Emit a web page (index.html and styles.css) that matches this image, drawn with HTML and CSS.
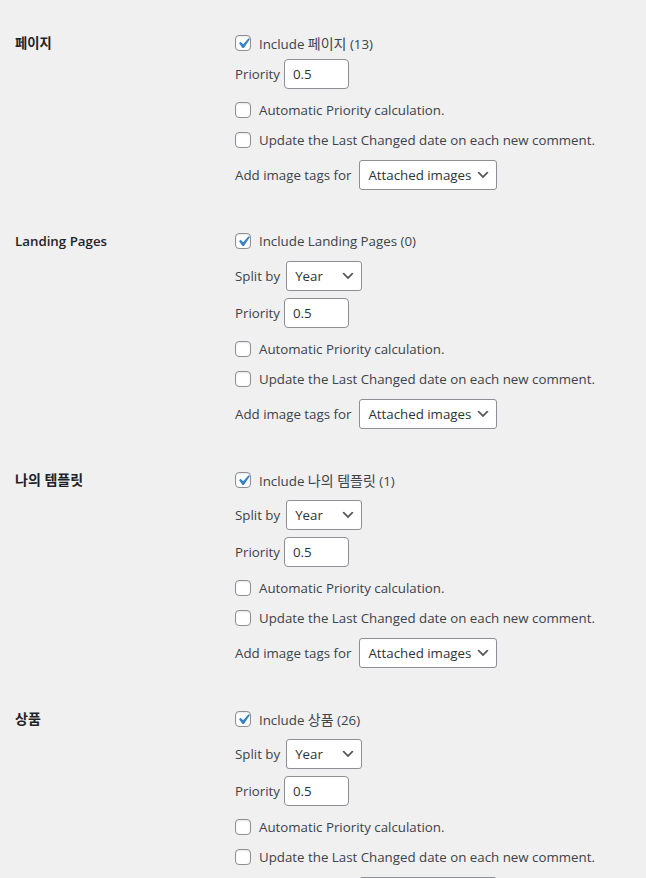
FILE: index.html
```html
<!DOCTYPE html>
<html lang="ko">
  <head>
    <meta charset="UTF-8" />
    <meta name="viewport" content="width=device-width, initial-scale=1" />
    <title>Sitemap settings</title>
    <link rel="stylesheet" href="styles.css">
  </head>
  <body>
    <div class="settings">
      <!-- 페이지 -->
      <section class="post-type">
        <h3 class="post-type-title">페이지</h3>
        <div class="post-type-fields">
          <label class="cb-row">
            <span class="check is-checked"><svg viewBox="0 0 20 20"><path d="M14.83 4.89l1.34.94-5.81 8.38H9.02L5.78 9.67l1.34-1.25 2.57 2.4z"/></svg></span>
            <span>Include <span class="ko">페이지</span> (13)</span>
          </label>
          <div class="field-row first-field">
            <span>Priority</span>
            <span class="text-input">0.5</span>
          </div>
          <label class="cb-row after-field">
            <span class="check"></span>
            Automatic Priority calculation.
          </label>
          <label class="cb-row">
            <span class="check"></span>
            Update the Last Changed date on each new comment.
          </label>
          <div class="field-row">
            <span>Add image tags for</span>
            <span class="select select-wide">Attached images<svg viewBox="0 0 20 20"><path d="M5 6l5 5 5-5 2 1-7 7-7-7 2-1z"/></svg></span>
          </div>
        </div>
      </section>

      <!-- Landing Pages -->
      <section class="post-type">
        <h3 class="post-type-title">Landing Pages</h3>
        <div class="post-type-fields">
          <label class="cb-row">
            <span class="check is-checked"><svg viewBox="0 0 20 20"><path d="M14.83 4.89l1.34.94-5.81 8.38H9.02L5.78 9.67l1.34-1.25 2.57 2.4z"/></svg></span>
            Include Landing Pages (0)
          </label>
          <div class="field-row">
            <span>Split by</span>
            <span class="select select-small">Year<svg viewBox="0 0 20 20"><path d="M5 6l5 5 5-5 2 1-7 7-7-7 2-1z"/></svg></span>
          </div>
          <div class="field-row after-select">
            <span>Priority</span>
            <span class="text-input">0.5</span>
          </div>
          <label class="cb-row after-field">
            <span class="check"></span>
            Automatic Priority calculation.
          </label>
          <label class="cb-row">
            <span class="check"></span>
            Update the Last Changed date on each new comment.
          </label>
          <div class="field-row">
            <span>Add image tags for</span>
            <span class="select select-wide">Attached images<svg viewBox="0 0 20 20"><path d="M5 6l5 5 5-5 2 1-7 7-7-7 2-1z"/></svg></span>
          </div>
        </div>
      </section>

      <!-- 나의 템플릿 -->
      <section class="post-type">
        <h3 class="post-type-title ko">나의 템플릿</h3>
        <div class="post-type-fields">
          <label class="cb-row">
            <span class="check is-checked"><svg viewBox="0 0 20 20"><path d="M14.83 4.89l1.34.94-5.81 8.38H9.02L5.78 9.67l1.34-1.25 2.57 2.4z"/></svg></span>
            <span>Include <span class="ko">나의 템플릿</span> (1)</span>
          </label>
          <div class="field-row">
            <span>Split by</span>
            <span class="select select-small">Year<svg viewBox="0 0 20 20"><path d="M5 6l5 5 5-5 2 1-7 7-7-7 2-1z"/></svg></span>
          </div>
          <div class="field-row after-select">
            <span>Priority</span>
            <span class="text-input">0.5</span>
          </div>
          <label class="cb-row after-field">
            <span class="check"></span>
            Automatic Priority calculation.
          </label>
          <label class="cb-row">
            <span class="check"></span>
            Update the Last Changed date on each new comment.
          </label>
          <div class="field-row">
            <span>Add image tags for</span>
            <span class="select select-wide">Attached images<svg viewBox="0 0 20 20"><path d="M5 6l5 5 5-5 2 1-7 7-7-7 2-1z"/></svg></span>
          </div>
        </div>
      </section>

      <!-- 상품 -->
      <section class="post-type">
        <h3 class="post-type-title ko">상품</h3>
        <div class="post-type-fields">
          <label class="cb-row">
            <span class="check is-checked"><svg viewBox="0 0 20 20"><path d="M14.83 4.89l1.34.94-5.81 8.38H9.02L5.78 9.67l1.34-1.25 2.57 2.4z"/></svg></span>
            <span>Include <span class="ko">상품</span> (26)</span>
          </label>
          <div class="field-row">
            <span>Split by</span>
            <span class="select select-small">Year<svg viewBox="0 0 20 20"><path d="M5 6l5 5 5-5 2 1-7 7-7-7 2-1z"/></svg></span>
          </div>
          <div class="field-row after-select">
            <span>Priority</span>
            <span class="text-input">0.5</span>
          </div>
          <label class="cb-row after-field">
            <span class="check"></span>
            Automatic Priority calculation.
          </label>
          <label class="cb-row">
            <span class="check"></span>
            Update the Last Changed date on each new comment.
          </label>
          <div class="field-row">
            <span>Add image tags for</span>
            <span class="select select-wide">Attached images<svg viewBox="0 0 20 20"><path d="M5 6l5 5 5-5 2 1-7 7-7-7 2-1z"/></svg></span>
          </div>
        </div>
      </section>
    </div>
  </body>
</html>
```

FILE: styles.css
```css
html,
body {
  margin: 0;
  background: #f0f0f1;
}

body {
  color: #3c434a;
  font-family: "Open Sans", "Noto Sans CJK KR", sans-serif;
  font-size: 13.3px;
  overflow: hidden;
}

/* Корейський текст трохи більший */
.ko {
  font-size: 14px;
}

/* Обгортка налаштувань */
.settings {
  display: flex;
  flex-direction: column;
  gap: 41px;
  padding: 33px 0 0 15px;
}

.post-type {
  display: grid;
  grid-template-columns: 220px 1fr;
}

.post-type-title {
  margin: 0;
  height: 20px;
  line-height: 20px;
  font-size: 13.3px;
  font-weight: 600;
  color: #1d2327;
}
.post-type-title.ko {
  font-size: 14px;
}

.post-type-fields {
  display: flex;
  flex-direction: column;
  gap: 10px;
}

/* Рядки */
.cb-row,
.field-row {
  display: flex;
  align-items: center;
  white-space: nowrap;
}
.cb-row {
  height: 20px;
  gap: 8px;
}
.field-row {
  height: 30px;
  gap: 4px;
}
.first-field {
  margin-top: -4px;
}
.after-select {
  margin-top: -3px;
}
.after-field {
  margin-top: 1px;
}

/* Чекбокс */
.check {
  position: relative;
  flex: none;
  width: 16px;
  height: 16px;
  box-sizing: border-box;
  border: 1px solid #8c8f94;
  border-radius: 4px;
  background: #fff;
  box-shadow: inset 0 1px 2px rgba(0, 0, 0, 0.1);
}
.check svg {
  position: absolute;
  top: -3px;
  left: -3px;
  width: 21px;
  height: 21px;
  fill: #3582c4;
}

/* Поле вводу */
.text-input {
  box-sizing: border-box;
  width: 65px;
  height: 30px;
  padding: 0 8px;
  line-height: 28px;
  border: 1px solid #8c8f94;
  border-radius: 4px;
  background: #fff;
  color: #2c3338;
}

/* Список */
.select {
  display: flex;
  align-items: center;
  justify-content: space-between;
  box-sizing: border-box;
  height: 30px;
  padding: 0 5px 0 8px;
  border: 1px solid #8c8f94;
  border-radius: 3px;
  background: #fff;
  color: #2c3338;
}
.select svg {
  width: 16px;
  height: 16px;
  fill: #555;
}
.select-small {
  width: 76px;
  margin-left: 2px;
}
.select-wide {
  width: 138px;
  margin-left: 4px;
}
```
